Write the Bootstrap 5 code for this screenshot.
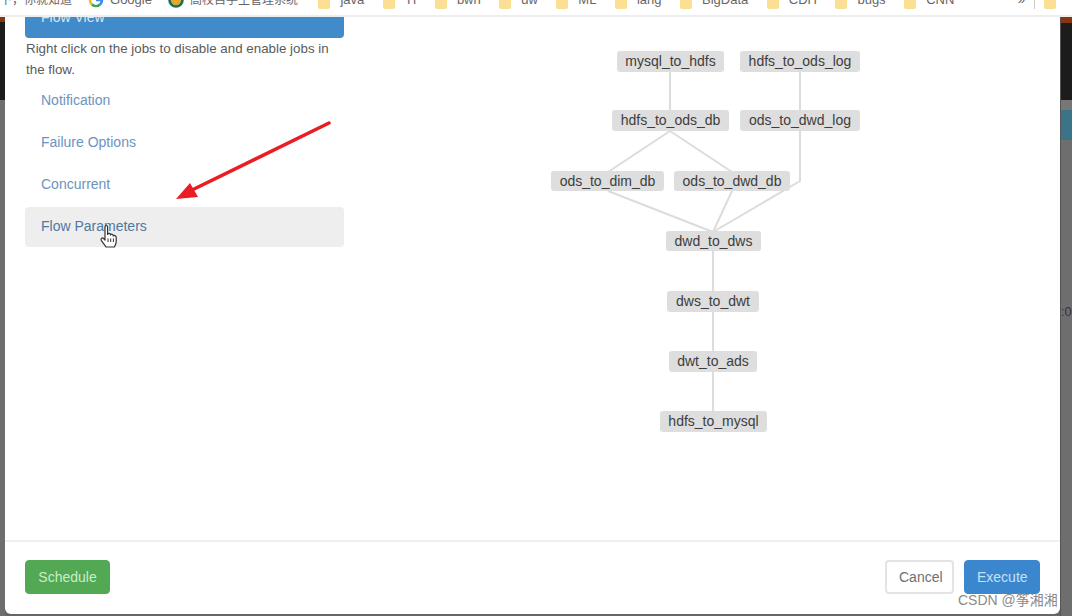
<!DOCTYPE html>
<html lang="en">
<head>
  <meta charset="UTF-8" />
  <title>Flow Parameters</title>
  <link rel="stylesheet" href="https://cdn.jsdelivr.net/npm/bootstrap@5.3.0/dist/css/bootstrap.min.css"/>
  <style>
    html, body {
      height: 616px;
      overflow: hidden;
      background: #666;
      font-family: "Liberation Sans", Arial, sans-serif;
      font-size: 14px;
      color: #555;
    }
    .shot { width: 1072px; height: 616px; position: relative; overflow: hidden; }

    /* browser bookmarks bar, cut off at the top of the capture */
    .bm-bar {
      height: 17px;
      overflow: hidden;
      background: #fff;
      border-bottom: 2px solid #eeeeee;
      font-size: 13px;
      line-height: 18px;
      color: #666;
      font-family: "Liberation Sans", "Noto Sans CJK SC", sans-serif;
      white-space: nowrap;
    }
    .bm-row { margin-top: -9px; gap: 18.5px; }
    .bm-item { gap: 10px; }
    .bm-first { font-size: 12px; margin-right: -2.5px; }
    .bm-site { gap: 6px; margin-right: -2.5px; }
    .bm-cn { font-size: 12px; margin-right: 2px; }
    .bm-folder { width: 12px; height: 18px; background: #fbdf92; border-radius: 2px; flex: none; }
    .bm-icon { width: 16px; height: 18px; flex: none; }
    .bm-more { margin-left: 45px; gap: 9px; }
    .bm-sep { width: 1px; height: 18px; background: #ccc; }

    .shot-main { height: 599px; }
    .edge-l { width: 5px; flex: none; }
    .edge-r { width: 12px; flex: none; overflow: hidden; font-size: 13px; color: #333; border-left: 1px solid #555; }
    .edge-orange { height: 5px; background: #8a3410; }
    .edge-black { height: 78px; background: #1c1c1c; }
    .edge-grey { flex: 1; background: #6e6e6e; }
    .edge-r .edge-orange { height: 6px; }
    .edge-r .edge-black { height: 77px; }
    .edge-mid { height: 10px; background: #777; }
    .edge-teal { height: 30px; background: #3b7489; }
    .edge-grey-text { padding-top: 163px; line-height: 18px; }

    .flow-modal {
      width: 1055px;
      height: 597px;
      flex: none;
      background: #fff;
      border: 0;
      border-radius: 0 0 6px 6px;
      overflow: hidden;
    }
    .flow-body { height: 523px; overflow: hidden; padding: 0 0 0 20px; }
    .flow-side { width: 319px; flex: none; }
    .flow-side .nav-link {
      height: 40px;
      padding: 9px 16px 11px;
      line-height: 20px;
      border-radius: 4px;
      color: #6c93bf;
    }
    .flow-side .nav-item + .nav-item { margin-top: 2px; }
    .flow-side .nav-link.active { background: #428bca; color: #d5e6f5; margin-top: -19px; }
    .flow-side .nav-link.hovered { background: #eeeeee; color: #4f78a3; }
    .flow-note { margin: 0 0 1px; padding-left: 1px; font-size: 13.35px; line-height: 21px; color: #5a5a5a; }

    .flow-graph { display: block; }
    .flow-graph line, .flow-graph polyline { stroke: #dcdcdc; stroke-width: 2; fill: none; }
    .flow-graph rect { fill: #dedede; }
    .flow-graph text { font-size: 14px; fill: #3d3d3d; text-anchor: middle; }

    .flow-foot {
      height: 74px;
      padding: 18px 20px 0;
      border-top: 2px solid #f0f0f0;
      align-items: flex-start;
    }
    .flow-foot .btn { height: 34px; font-size: 14px; padding: 5px 12px; border-radius: 4px; line-height: 20px; margin: 0; }
    .btn-sched { width: 85px; background: #53a854; border-color: #53a854; color: #c9eec9; }
    .btn-cancel { width: 69px; background: #fff; border-color: #e4e4e4; border-width: 2px; color: #707070; }
    .btn-exec { width: 76px; margin-left: 10px !important; background: #3a87cd; border-color: #3a87cd; color: #c5e0f6; }

    .over-arrow { position: absolute; left: 170px; top: 115px; }
    .over-hand { position: absolute; left: 99px; top: 224px; }
    .over-mark {
      position: absolute;
      left: 958px;
      top: 591px;
      font-family: "Liberation Sans", "Noto Sans CJK SC", sans-serif;
      font-size: 14px;
      line-height: 18px;
      color: #8b8b8b;
      white-space: nowrap;
    }
  </style>
</head>
<body>
  <div class="shot">
    <div class="bm-bar">
      <div class="d-flex align-items-center bm-row">
        <span class="bm-first">下，你就知道</span>
        <span class="d-flex align-items-center bm-site">
          <svg class="bm-icon" viewBox="0 0 16 18">
            <path d="M2 9a6 6 0 0 1 10-4.5" fill="none" stroke="#e5483a" stroke-width="2.6"/>
            <path d="M2 9a6 6 0 0 0 2 4.5" fill="none" stroke="#f3bb1b" stroke-width="2.6"/>
            <path d="M4 13.5a6 6 0 0 0 8 0" fill="none" stroke="#34a853" stroke-width="2.6"/>
            <path d="M12 13.5a6 6 0 0 0 2-4.5H8" fill="none" stroke="#4285f4" stroke-width="2.6"/>
          </svg>
          Google
        </span>
        <span class="d-flex align-items-center bm-site bm-cn">
          <svg class="bm-icon" viewBox="0 0 16 18">
            <circle cx="8" cy="9" r="6.5" fill="#e6a52c" stroke="#15725c" stroke-width="2.6"/>
          </svg>
          高校自学生管理系统
        </span>
        <span class="d-flex align-items-center bm-item"><i class="bm-folder"></i>java</span>
        <span class="d-flex align-items-center bm-item"><i class="bm-folder"></i>TI</span>
        <span class="d-flex align-items-center bm-item"><i class="bm-folder"></i>bwh</span>
        <span class="d-flex align-items-center bm-item"><i class="bm-folder"></i>dw</span>
        <span class="d-flex align-items-center bm-item"><i class="bm-folder"></i>ML</span>
        <span class="d-flex align-items-center bm-item"><i class="bm-folder"></i>lang</span>
        <span class="d-flex align-items-center bm-item"><i class="bm-folder"></i>BigData</span>
        <span class="d-flex align-items-center bm-item"><i class="bm-folder"></i>CDH</span>
        <span class="d-flex align-items-center bm-item"><i class="bm-folder"></i>bugs</span>
        <span class="d-flex align-items-center bm-item"><i class="bm-folder"></i>CNN</span>
        <span class="d-flex align-items-center bm-more">»<i class="bm-sep"></i><i class="bm-folder"></i></span>
      </div>
    </div>

    <div class="d-flex shot-main">
      <div class="d-flex flex-column edge-l">
        <div class="edge-orange"></div>
        <div class="edge-black"></div>
        <div class="edge-grey"></div>
      </div>

      <div class="modal-content flow-modal">
        <div class="d-flex flow-body">
          <div class="flow-side">
            <ul class="nav nav-pills flex-column">
              <li class="nav-item"><a class="nav-link active" href="#">Flow View</a></li>
            </ul>
            <p class="flow-note">Right click on the jobs to disable and enable jobs in the flow.</p>
            <ul class="nav nav-pills flex-column">
              <li class="nav-item"><a class="nav-link" href="#">Notification</a></li>
              <li class="nav-item"><a class="nav-link" href="#">Failure Options</a></li>
              <li class="nav-item"><a class="nav-link" href="#">Concurrent</a></li>
              <li class="nav-item"><a class="nav-link hovered" href="#">Flow Parameters</a></li>
            </ul>
          </div>
          <svg class="flow-graph flex-grow-1" width="716" height="523" viewBox="344 17 716 523">
            <line x1="670" y1="71" x2="670" y2="111"/>
            <line x1="800" y1="71" x2="800" y2="111"/>
            <line x1="670" y1="131" x2="608" y2="172"/>
            <line x1="670" y1="131" x2="732" y2="172"/>
            <line x1="608" y1="191" x2="713" y2="232"/>
            <line x1="732" y1="191" x2="713" y2="232"/>
            <polyline points="800,131 800,181 713,232"/>
            <line x1="713" y1="251" x2="713" y2="411"/>

            <rect x="617" y="51" width="107" height="21" rx="3"/><text x="670.5" y="66">mysql_to_hdfs</text>
            <rect x="740" y="51" width="120" height="21" rx="3"/><text x="800" y="66">hdfs_to_ods_log</text>
            <rect x="612" y="110" width="117" height="21" rx="3"/><text x="670.5" y="125">hdfs_to_ods_db</text>
            <rect x="740" y="110" width="120" height="21" rx="3"/><text x="800" y="125">ods_to_dwd_log</text>
            <rect x="551" y="171" width="113" height="20" rx="3"/><text x="607.5" y="186">ods_to_dim_db</text>
            <rect x="674" y="171" width="116" height="20" rx="3"/><text x="732" y="186">ods_to_dwd_db</text>
            <rect x="666" y="231" width="95" height="20" rx="3"/><text x="713.5" y="246">dwd_to_dws</text>
            <rect x="667" y="291" width="92" height="21" rx="3"/><text x="713" y="306">dws_to_dwt</text>
            <rect x="669" y="351" width="88" height="21" rx="3"/><text x="713" y="366">dwt_to_ads</text>
            <rect x="660" y="411" width="107" height="21" rx="3"/><text x="713.5" y="426">hdfs_to_mysql</text>
          </svg>
        </div>
        <div class="d-flex justify-content-between flow-foot">
          <button class="btn btn-sched" type="button">Schedule</button>
          <div class="d-flex">
            <button class="btn btn-cancel" type="button">Cancel</button>
            <button class="btn btn-exec" type="button">Execute</button>
          </div>
        </div>
      </div>

      <div class="d-flex flex-column edge-r">
        <div class="edge-orange"></div>
        <div class="edge-black"></div>
        <div class="edge-mid"></div>
        <div class="edge-teal"></div>
        <div class="edge-grey edge-grey-text">:0</div>
      </div>
    </div>

    <svg class="over-arrow" width="166" height="92" viewBox="170 115 166 92">
      <line x1="329" y1="123" x2="190" y2="191" stroke="#ea1c24" stroke-width="3.5" stroke-linecap="round"/>
      <polygon points="176,199 190,183 198,197" fill="#ea1c24"/>
    </svg>

    <svg class="over-hand" width="19" height="24" viewBox="0 0 19 24">
      <path d="M6 3C6 1 8.6 1 8.6 3V10.5C9.2 9 11.2 9 11.5 11C12.2 9.6 14.2 10 14.3 12C15.2 11 17.2 11.4 17.2 13.5V17.5C17.2 20 16 21.5 15.4 23H7C6 21 4.5 19.5 2.4 16.6C1.2 14.8 3 13 4.6 14.5L6 16Z" fill="#fff" stroke="#333" stroke-width="1.2" stroke-linejoin="round"/>
      <path d="M9 14.5V18M11.7 14.5V18M14.4 14.5V18" fill="none" stroke="#333"/>
    </svg>

    <div class="over-mark">CSDN @筝湘湘</div>
  </div>

  <script src="https://cdn.jsdelivr.net/npm/bootstrap@5.3.0/dist/js/bootstrap.bundle.min.js"></script>
</body>
</html>
